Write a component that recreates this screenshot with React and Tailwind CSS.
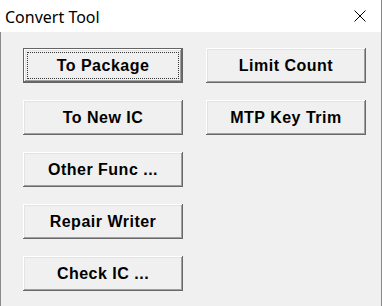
import React from "react";

const LEFT = ["To Package", "To New IC", "Other Func ...", "Repair Writer", "Check IC ..."];
const RIGHT = ["Limit Count", "MTP Key Trim"];

function WinButton({ label, isDefault }) {
  const bevel =
    "shadow-[inset_-1px_-1px_0_#696969,inset_1px_1px_0_#ffffff,inset_-2px_-2px_0_#a0a0a0,inset_2px_2px_0_#e3e3e3]";
  return (
    <button
      type="button"
      className={`relative flex h-[35px] w-[160px] items-center justify-center bg-[#f0f0f0] text-[16px] font-bold tracking-[0.5px] text-black ${
        isDefault ? "border border-[#646464]" : ""
      }`}
      style={{ fontFamily: '"Liberation Sans", Arial, sans-serif' }}
    >
      <span className={`absolute inset-0 ${bevel}`} />
      {isDefault ? (
        <span className="absolute inset-[3px] border border-dotted border-[#333]" />
      ) : null}
      <span className="relative">{label}</span>
    </button>
  );
}

export default function App() {
  return (
    <div className="flex h-[306px] w-[382px] flex-col overflow-hidden border-r border-[#888]">
      <div className="flex h-[32px] shrink-0 items-center justify-between bg-white pl-[5px] pr-[15px]">
        <span
          className="pt-[1px] text-[16px] text-black"
          style={{ fontFamily: '"Segoe UI", "Noto Sans", sans-serif' }}
        >
          Convert Tool
        </span>
        <svg width="12" height="12" viewBox="0 0 12 12" className="mb-[1px]">
          <path d="M0.5 0.5 L11.5 11.5 M11.5 0.5 L0.5 11.5" stroke="#000" strokeWidth="1" />
        </svg>
      </div>
      <div className="flex flex-1 gap-[23px] border-l border-[#8a8a8a] bg-[#f0f0f0] pl-[22px] pt-[16px]">
        <div className="flex flex-col gap-[17px]">
          {LEFT.map((l, i) => (
            <WinButton key={l} label={l} isDefault={i === 0} />
          ))}
        </div>
        <div className="flex flex-col gap-[17px]">
          {RIGHT.map((l) => (
            <WinButton key={l} label={l} />
          ))}
        </div>
      </div>
    </div>
  );
}
